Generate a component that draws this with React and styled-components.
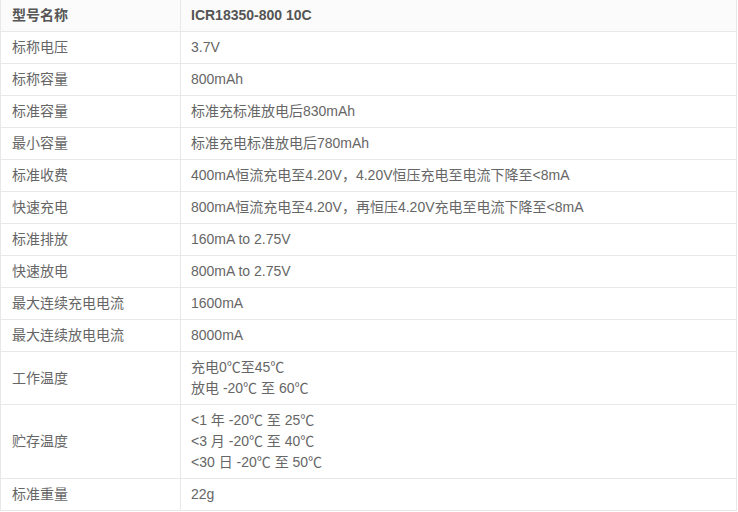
import React from "react";
import styled, { createGlobalStyle } from "styled-components";

const Global = createGlobalStyle`
  html, body { margin: 0; padding: 0; background: #fff; }
  body { font-family: "Liberation Sans", Arial, "Noto Sans CJK SC", sans-serif; }
`;

const Table = styled.table`
  width: 737px;
  border-collapse: collapse;
  margin-top: -1px;
  font-size: 14px;
  color: #666;
`;

const Cell = styled.td`
  border: 1px solid #e8e8e8;
  padding: 5px 10px 5px ${(p) => (p.$label ? "11px" : "10px")};
  line-height: 21px;
  vertical-align: middle;
  text-align: left;
  white-space: nowrap;
  font-weight: ${(p) => (p.$head ? 700 : 400)};
  color: ${(p) => (p.$head ? "#555" : "#666")};
  width: ${(p) => (p.$label ? "158px" : "auto")};
`;

const Row = styled.tr`
  background: ${(p) => (p.$head ? "#fbfbfb" : "#fff")};
`;

const Line = styled.div``;

const rows = [
  ["标称电压", ["3.7V"]],
  ["标称容量", ["800mAh"]],
  ["标准容量", ["标准充标准放电后830mAh"]],
  ["最小容量", ["标准充电标准放电后780mAh"]],
  ["标准收费", ["400mA恒流充电至4.20V，4.20V恒压充电至电流下降至<8mA"]],
  ["快速充电", ["800mA恒流充电至4.20V，再恒压4.20V充电至电流下降至<8mA"]],
  ["标准排放", ["160mA to 2.75V"]],
  ["快速放电", ["800mA to 2.75V"]],
  ["最大连续充电电流", ["1600mA"]],
  ["最大连续放电电流", ["8000mA"]],
  ["工作温度", ["充电0℃至45℃", "放电 -20℃ 至 60℃"]],
  ["贮存温度", ["<1 年 -20℃ 至 25℃", "<3 月 -20℃ 至 40℃", "<30 日 -20℃ 至 50℃"]],
  ["标准重量", ["22g"]],
];

export default function App() {
  return (
    <>
      <Global />
      <Table>
        <tbody>
          <Row $head>
            <Cell $head $label>型号名称</Cell>
            <Cell $head>ICR18350-800 10C</Cell>
          </Row>
          {rows.map(([k, v]) => (
            <Row key={k}>
              <Cell $label>{k}</Cell>
              <Cell>
                {v.map((l) => (
                  <Line key={l}>{l}</Line>
                ))}
              </Cell>
            </Row>
          ))}
        </tbody>
      </Table>
    </>
  );
}
